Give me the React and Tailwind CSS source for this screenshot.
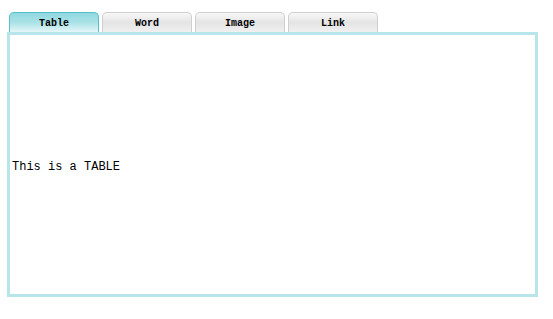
import React, { useState } from "react";

const tabs = ["Table", "Word", "Image", "Link"];

export default function App() {
  const [active, setActive] = useState("Table");

  return (
    <div className="w-[553px] h-[319px] bg-white pt-[12px] pl-[7px]">
      {/* Tabs */}
      <div className="flex gap-[3px] pl-[2px] h-[20px]">
        {tabs.map((t) => (
          <button
            key={t}
            onClick={() => setActive(t)}
            className={`w-[90px] h-[20px] rounded-t-[5px] border border-b-0 text-[10px] font-bold text-black pt-[1px] ${
              active === t
                ? "border-[#5bbfca] bg-gradient-to-b from-[#8fd8df] via-[#a9e2e7] to-[#e4f6f7]"
                : "border-[#cfcfcf] bg-gradient-to-b from-[#f8f8f8] via-[#e4e4e4] to-[#f0f0f0]"
            }`}
            style={{ fontFamily: '"Liberation Mono", "DejaVu Sans Mono", monospace' }}
          >
            {t}
          </button>
        ))}
      </div>

      {/* Panel */}
      <div className="w-[531px] h-[265px] border-[3px] border-[#b7e5ea] flex items-center">
        <span
          className="text-[12px] text-black pl-[2px] pt-[4px]"
          style={{ fontFamily: '"Liberation Mono", "DejaVu Sans Mono", monospace' }}
        >
          This is a {active.toUpperCase()}
        </span>
      </div>
    </div>
  );
}
